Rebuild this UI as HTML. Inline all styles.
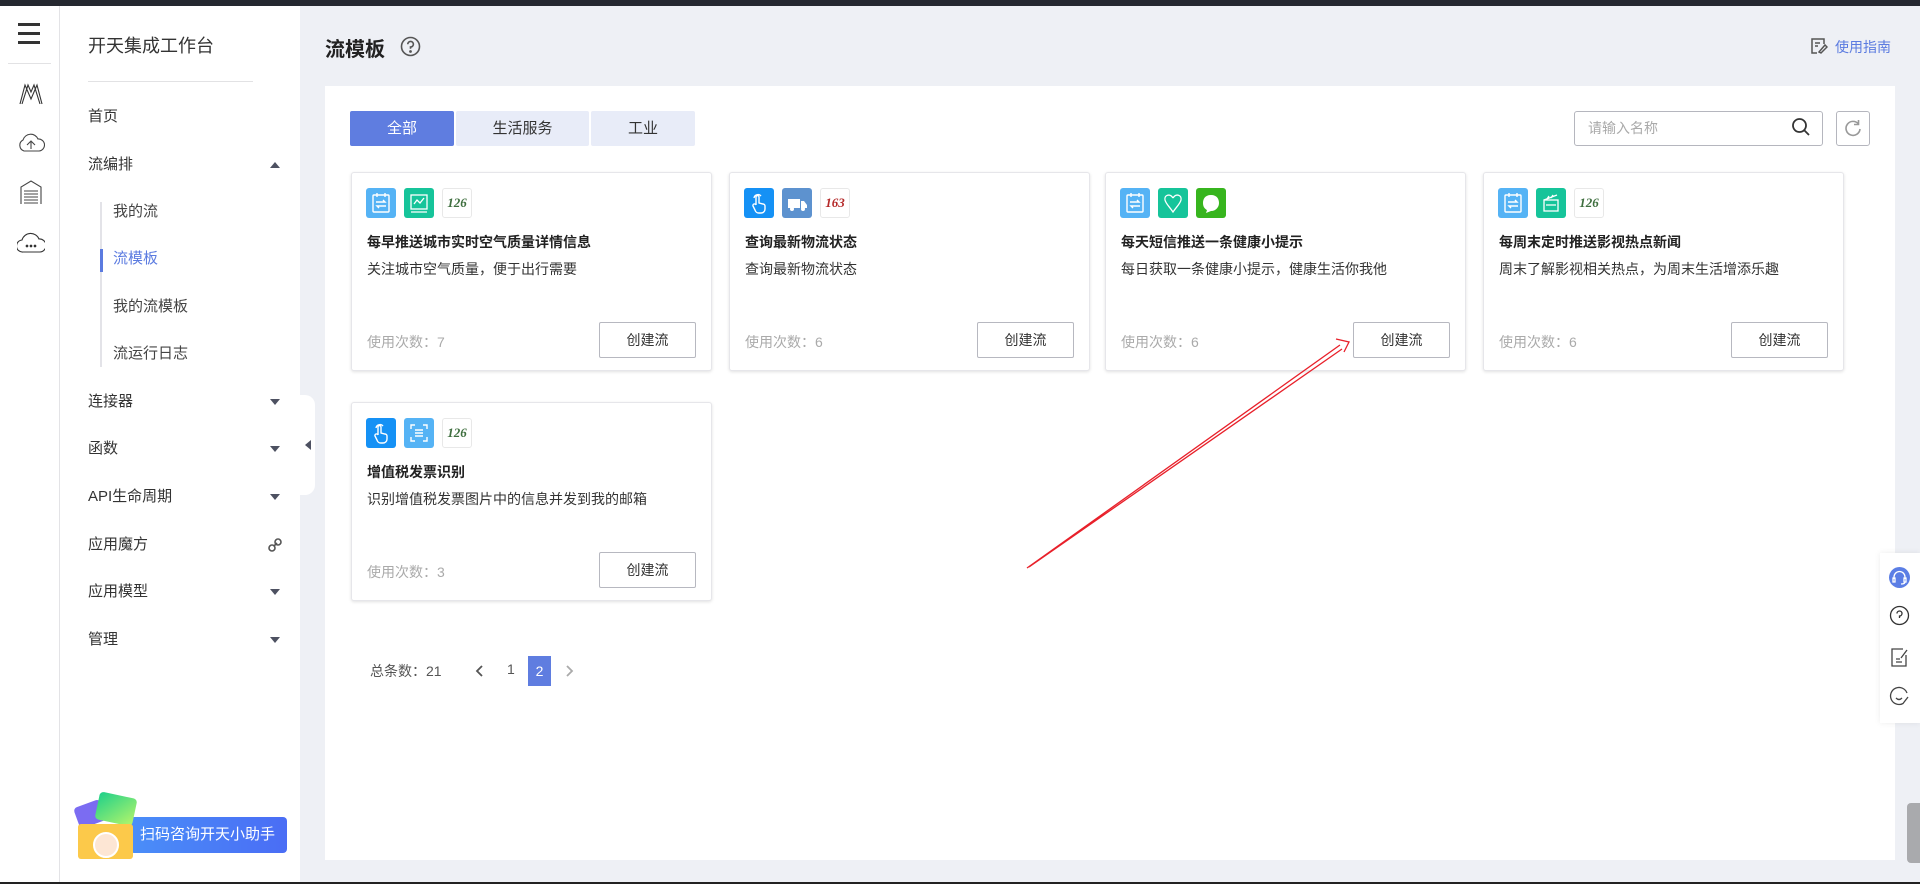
<!DOCTYPE html>
<html><head><meta charset="utf-8"><style>
*{margin:0;padding:0;box-sizing:border-box}
body{width:1920px;height:884px;overflow:hidden;background:#eef0f5;font-family:"Liberation Sans","Noto Sans CJK SC",sans-serif;color:#333;position:relative;font-size:14px}
.abs{position:absolute}
.topbar{left:0;top:0;width:1920px;height:6px;background:#252830}
.rail{left:0;top:6px;width:60px;height:877px;background:#fff;border-right:1px solid #e3e3e6}
.menu{left:60px;top:6px;width:240px;height:877px;background:#fff}
.bottomline{left:0;top:882px;width:1920px;height:2px;background:#222}
.mi{position:absolute;left:88px;font-size:15px;color:#333;line-height:20px}
.sub{position:absolute;left:113px;font-size:15px;color:#444;line-height:20px}
.tri{position:absolute;left:270px;width:0;height:0;border-left:5px solid transparent;border-right:5px solid transparent;border-top:6px solid #4d5161}
.panel{left:325px;top:86px;width:1570px;height:774px;background:#fff}
.tab{position:absolute;top:111px;height:35px;line-height:35px;text-align:center;font-size:15px;color:#333;background:#e8ecf8;border-radius:2px}
.card{position:absolute;width:361px;height:199px;background:#fff;border:1px solid #e6e6ea;border-radius:3px;box-shadow:0 1px 3px rgba(0,0,0,.12)}
.icons{position:absolute;left:14px;top:15px;display:flex;gap:8px}
.ic{width:30px;height:30px;border-radius:3px;display:flex;align-items:center;justify-content:center;font-size:13px;font-weight:bold;font-style:italic;font-family:"Liberation Serif",serif}
.ic.w{border:1px solid #e8e8e8;background:#fff}
.ct{position:absolute;left:15px;top:59px;font-size:14px;font-weight:bold;color:#222}
.cd{position:absolute;left:15px;top:86px;font-size:14px;color:#333}
.cu{position:absolute;left:15px;top:159px;font-size:14px;color:#aaa}
.btn{position:absolute;left:247px;top:149px;width:97px;height:36px;border:1px solid #b7b8c0;border-radius:2px;text-align:center;line-height:34px;font-size:14px;color:#333}
</style></head><body>
<div class="abs topbar"></div>
<div class="abs rail">
 <div class="abs" style="left:18px;top:17px;width:22px;height:3px;background:#333"></div>
 <div class="abs" style="left:18px;top:26px;width:22px;height:3px;background:#333"></div>
 <div class="abs" style="left:18px;top:35px;width:22px;height:3px;background:#333"></div>
 <div class="abs" style="left:8px;top:57px;width:43px;height:1px;background:#e2e2e4"></div>
 <svg class="abs" style="left:18px;top:76px" width="26" height="24" viewBox="0 0 26 24" fill="none" stroke="#333" stroke-width="1.1"><path d="M2 22 L7 3 L13 17 L19 3 L24 22 M4 22 L10 3 L13 10 L16 3 L22 22"/></svg>
 <svg class="abs" style="left:17px;top:126px" width="28" height="22" viewBox="0 0 28 22" fill="none" stroke="#444" stroke-width="1.1"><path d="M7 19 A6 6 0 0 1 6 8 A8 8 0 0 1 21 7 A6 6 0 0 1 22 19 Z M14 17 V10 M10 13 L14 9 L18 13"/></svg>
 <svg class="abs" style="left:19px;top:173px" width="24" height="26" viewBox="0 0 24 26" fill="none" stroke="#444" stroke-width="1.1"><path d="M2 25 V8 L12 2 L22 8 V25 M5 12 H19 M5 15 H19 M5 18 H19 M5 21 H19 M5 24 H19"/></svg>
 <svg class="abs" style="left:17px;top:226px" width="28" height="22" viewBox="0 0 28 22" fill="#333" stroke="#333" stroke-width="1.1"><path fill="none" d="M6 20 A6 6 0 0 1 5 8 A9 9 0 0 1 22 7 A6 6 0 0 1 23 20 Z"/><circle cx="10" cy="14" r=".8"/><circle cx="14" cy="14" r=".8"/><circle cx="18" cy="14" r=".8"/></svg>
</div>
<div class="abs menu">
 <div class="abs" style="left:28px;top:26px;font-size:18px;color:#333">开天集成工作台</div>
 <div class="abs" style="left:28px;top:75px;width:165px;height:1px;background:#e2e2e4"></div>
</div>
<div class="mi" style="top:107px">首页</div>
<div class="mi" style="top:155px">流编排</div>
<div class="abs" style="left:270px;top:162px;width:0;height:0;border-left:5px solid transparent;border-right:5px solid transparent;border-bottom:6px solid #4d5161"></div>
<div class="abs" style="left:100px;top:202px;width:2px;height:165px;background:#e3e3e8"></div>
<div class="abs" style="left:100px;top:249px;width:3px;height:23px;background:#5b7be0"></div>
<div class="sub" style="top:202px">我的流</div>
<div class="sub" style="top:249px;color:#5b7be0">流模板</div>
<div class="sub" style="top:297px">我的流模板</div>
<div class="sub" style="top:344px">流运行日志</div>
<div class="mi" style="top:392px">连接器</div><div class="tri" style="top:399px"></div>
<div class="mi" style="top:439px">函数</div><div class="tri" style="top:446px"></div>
<div class="mi" style="top:487px">API生命周期</div><div class="tri" style="top:494px"></div>
<div class="mi" style="top:535px">应用魔方</div>
<svg class="abs" style="left:267px;top:537px" width="16" height="16" viewBox="0 0 16 16" fill="none" stroke="#555" stroke-width="1.6"><path d="M7 9 L10 6"/><circle cx="5" cy="11" r="3"/><circle cx="11" cy="5" r="3"/></svg>
<div class="mi" style="top:582px">应用模型</div><div class="tri" style="top:589px"></div>
<div class="mi" style="top:630px">管理</div><div class="tri" style="top:637px"></div>
<div class="abs" style="left:300px;top:395px;width:15px;height:100px;background:#fff;border-radius:0 10px 10px 0"></div>
<div class="abs" style="left:305px;top:440px;width:0;height:0;border-top:5px solid transparent;border-bottom:5px solid transparent;border-right:6px solid #4d5161"></div>
<!-- assistant -->
<div class="abs" style="left:130px;top:817px;width:157px;height:36px;border-radius:4px;background:linear-gradient(90deg,#4a8ef8,#4a6df5);color:#fff;font-size:15px;line-height:36px;padding-left:10px">扫码咨询开天小助手</div>
<div class="abs" style="left:76px;top:803px;width:28px;height:22px;background:#7b6cf2;border-radius:4px;transform:rotate(-20deg)"></div>
<div class="abs" style="left:97px;top:795px;width:38px;height:28px;background:linear-gradient(135deg,#1ed08a,#b6f56a);border-radius:4px;transform:rotate(12deg)"></div>
<div class="abs" style="left:78px;top:824px;width:55px;height:35px;background:#fcc94a;border-radius:3px"></div>
<div class="abs" style="left:93px;top:832px;width:26px;height:26px;background:#fde6d4;border-radius:50%;border:2px solid #fff"></div>
<!-- main -->
<div class="abs" style="left:325px;top:33px;font-size:20px;font-weight:bold;color:#222">流模板</div>
<svg class="abs" style="left:400px;top:36px" width="21" height="21" viewBox="0 0 21 21" fill="none" stroke="#555" stroke-width="1.6"><circle cx="10.5" cy="10.5" r="9"/><path d="M7.8 8.2 A2.8 2.8 0 1 1 10.5 11 V12.8"/><circle cx="10.5" cy="15.5" r=".6" fill="#555"/></svg>
<svg class="abs" style="left:1810px;top:37px" width="18" height="18" viewBox="0 0 18 18" fill="none" stroke="#555" stroke-width="1.5"><path d="M14 7 V2 H2 V16 H7 M5 6 H10 M5 9 H8 M9 15 L15 8 L17 10 L11 16 Z"/></svg>
<div class="abs" style="left:1835px;top:37px;font-size:14px;color:#5b7be0">使用指南</div>
<div class="abs panel"></div>
<div class="tab" style="left:350px;width:104px;background:#5f7de0;color:#fff">全部</div>
<div class="tab" style="left:456px;width:133px">生活服务</div>
<div class="tab" style="left:591px;width:104px">工业</div>
<div class="abs" style="left:1574px;top:111px;width:249px;height:35px;border:1px solid #b5b6be;border-radius:3px;color:#aaa;font-size:14px;line-height:33px;padding-left:13px">请输入名称</div>
<svg class="abs" style="left:1791px;top:117px" width="20" height="20" viewBox="0 0 20 20" fill="none" stroke="#333" stroke-width="1.8"><circle cx="8.5" cy="8.5" r="6.5"/><path d="M13.5 13.5 L18 18"/></svg>
<div class="abs" style="left:1836px;top:111px;width:34px;height:35px;border:1px solid #b5b6be;border-radius:3px"></div>
<svg class="abs" style="left:1843px;top:118px" width="20" height="20" viewBox="0 0 20 20" fill="none" stroke="#999" stroke-width="1.6"><path d="M15.5 6 A7 7 0 1 0 17 11 M15.5 2 V6.5 H11"/></svg>

<svg width="0" height="0" style="position:absolute"><defs>
<symbol id="cal" viewBox="0 0 30 30"><g fill="none" stroke="#fff" stroke-width="1.4"><rect x="7" y="7" width="16" height="17" rx="1"/><path d="M11 5 V9 M19 5 V9 M10 14 H19 L17 12 M20 18 H11 L13 20"/></g></symbol>
<symbol id="hand" viewBox="0 0 30 30"><g fill="none" stroke="#fff" stroke-width="1.4"><path d="M12 17 V9 A1.5 1.5 0 0 1 15 9 V15 L19 16 A2 2 0 0 1 21 18 V21 A4 4 0 0 1 17 25 H15 A4 4 0 0 1 11 22 L9 18 A1.2 1.2 0 0 1 12 17"/><path d="M10 10 A4 4 0 0 1 17 8"/></g></symbol>
</defs></svg>

<div class="card" style="left:351px;top:172px">
 <div class="icons"><div class="ic" style="background:#55b3f5"><svg width="30" height="30"><use href="#cal"/></svg></div><div class="ic" style="background:#16c49a"><svg width="30" height="30" fill="none" stroke="#fff" stroke-width="1.3"><rect x="7" y="7" width="16" height="14"/><path d="M10 16 L13 12 L16 15 L20 10 M7 24 H23"/></svg></div><div class="ic w" style="color:#3f6f3f">126</div></div>
 <div class="ct">每早推送城市实时空气质量详情信息</div><div class="cd">关注城市空气质量，便于出行需要</div>
 <div class="cu">使用次数：7</div><div class="btn">创建流</div></div>
<div class="card" style="left:729px;top:172px">
 <div class="icons"><div class="ic" style="background:#1591f5"><svg width="30" height="30"><use href="#hand"/></svg></div><div class="ic" style="background:#5d92cf"><svg width="30" height="30" fill="#fff"><rect x="6" y="11" width="12" height="9"/><path d="M19 13 H22 L25 17 V20 H19 Z"/><circle cx="10" cy="21" r="2"/><circle cx="21" cy="21" r="2"/></svg></div><div class="ic w" style="color:#b52a2a">163</div></div>
 <div class="ct">查询最新物流状态</div><div class="cd">查询最新物流状态</div>
 <div class="cu">使用次数：6</div><div class="btn">创建流</div></div>
<div class="card" style="left:1105px;top:172px">
 <div class="icons"><div class="ic" style="background:#55b3f5"><svg width="30" height="30"><use href="#cal"/></svg></div><div class="ic" style="background:#16c49a"><svg width="30" height="30" fill="none" stroke="#fff" stroke-width="1.3"><path d="M15 10 C12 5 6 7 7 12 C8 16 11 18 15 24 C19 18 22 16 23 12 C24 7 18 5 15 10"/></svg></div><div class="ic" style="background:#37b51e"><svg width="30" height="30" fill="#fff"><path d="M15 7 C9 7 7 11 7 15 C7 19 9 21 11 22 L10 25 L15 23 C20 23 23 19 23 15 C23 11 21 7 15 7"/></svg></div></div>
 <div class="ct">每天短信推送一条健康小提示</div><div class="cd">每日获取一条健康小提示，健康生活你我他</div>
 <div class="cu">使用次数：6</div><div class="btn">创建流</div></div>
<div class="card" style="left:1483px;top:172px">
 <div class="icons"><div class="ic" style="background:#55b3f5"><svg width="30" height="30"><use href="#cal"/></svg></div><div class="ic" style="background:#16c49a"><svg width="30" height="30" fill="none" stroke="#fff" stroke-width="1.3"><rect x="8" y="12" width="14" height="11"/><path d="M8 12 L21 7 M11 11 L13 8 M15 10 L17 7 M10 17 H20"/></svg></div><div class="ic w" style="color:#3f6f3f">126</div></div>
 <div class="ct">每周末定时推送影视热点新闻</div><div class="cd">周末了解影视相关热点，为周末生活增添乐趣</div>
 <div class="cu">使用次数：6</div><div class="btn">创建流</div></div>
<div class="card" style="left:351px;top:402px">
 <div class="icons"><div class="ic" style="background:#1591f5"><svg width="30" height="30"><use href="#hand"/></svg></div><div class="ic" style="background:#55b3f5"><svg width="30" height="30" fill="none" stroke="#fff" stroke-width="1.4"><path d="M7 11 V7 H11 M19 7 H23 V11 M23 19 V23 H19 M11 23 H7 V19 M11 12 H19 M11 15 H19 M11 18 H19"/></svg></div><div class="ic w" style="color:#3f6f3f">126</div></div>
 <div class="ct">增值税发票识别</div><div class="cd">识别增值税发票图片中的信息并发到我的邮箱</div>
 <div class="cu">使用次数：3</div><div class="btn">创建流</div></div>

<div class="abs" style="left:370px;top:661px;font-size:14px;color:#555">总条数：21</div>
<svg class="abs" style="left:474px;top:664px" width="12" height="14" fill="none" stroke="#555" stroke-width="1.8"><path d="M8 2 L3 7 L8 12"/></svg>
<div class="abs" style="left:507px;top:661px;font-size:14px;color:#555">1</div>
<div class="abs" style="left:528px;top:656px;width:23px;height:30px;background:#5f7de0;color:#fff;text-align:center;line-height:30px;font-size:14px">2</div>
<svg class="abs" style="left:563px;top:664px" width="12" height="14" fill="none" stroke="#aaa" stroke-width="1.8"><path d="M4 2 L9 7 L4 12"/></svg>

<svg class="abs" style="left:0;top:0" width="1920" height="884" fill="none" stroke="#e8202a" stroke-width="1.3"><path d="M1027 568 L1340 345 M1029 567 L1342 349 M1336 339 L1349 342 L1344 352"/></svg>

<div class="abs" style="left:1880px;top:553px;width:40px;height:170px;background:#fff;box-shadow:0 0 6px rgba(0,0,0,.08)"></div>
<div class="abs" style="left:1889px;top:567px;width:21px;height:21px;border-radius:50%;background:#5b7ee5"></div>
<svg class="abs" style="left:1889px;top:567px" width="21" height="21" fill="none" stroke="#fff" stroke-width="1.3"><path d="M5 12 V10 A5.5 5.5 0 0 1 16 10 V12 M4 11 H6 V15 H4 Z M15 11 H17 V15 H15 Z M16 15 Q16 17 12 17"/></svg>
<svg class="abs" style="left:1889px;top:605px" width="21" height="21" viewBox="0 0 21 21" fill="none" stroke="#333" stroke-width="1.3"><circle cx="10.5" cy="10.5" r="9"/><path d="M8 8.5 A2.5 2.5 0 1 1 10.5 11 V13"/></svg>
<svg class="abs" style="left:1890px;top:647px" width="20" height="20" viewBox="0 0 20 20" fill="none" stroke="#444" stroke-width="1.3"><path d="M13 2 H2 V19 H16 V8 M6 12 H10 M6 15 H12 M11 11 L17 3"/></svg>
<svg class="abs" style="left:1889px;top:685px" width="21" height="21" viewBox="0 0 21 21" fill="none" stroke="#444" stroke-width="1.3"><path d="M18 8 A8.5 8.5 0 1 0 14 18.5 L19 12"/><path d="M7 13 Q10 16 13 13"/></svg>
<div class="abs" style="left:1907px;top:803px;width:13px;height:60px;background:#a9aaad;border-radius:4px 0 0 4px"></div>
<div class="abs bottomline"></div>
</body></html>
